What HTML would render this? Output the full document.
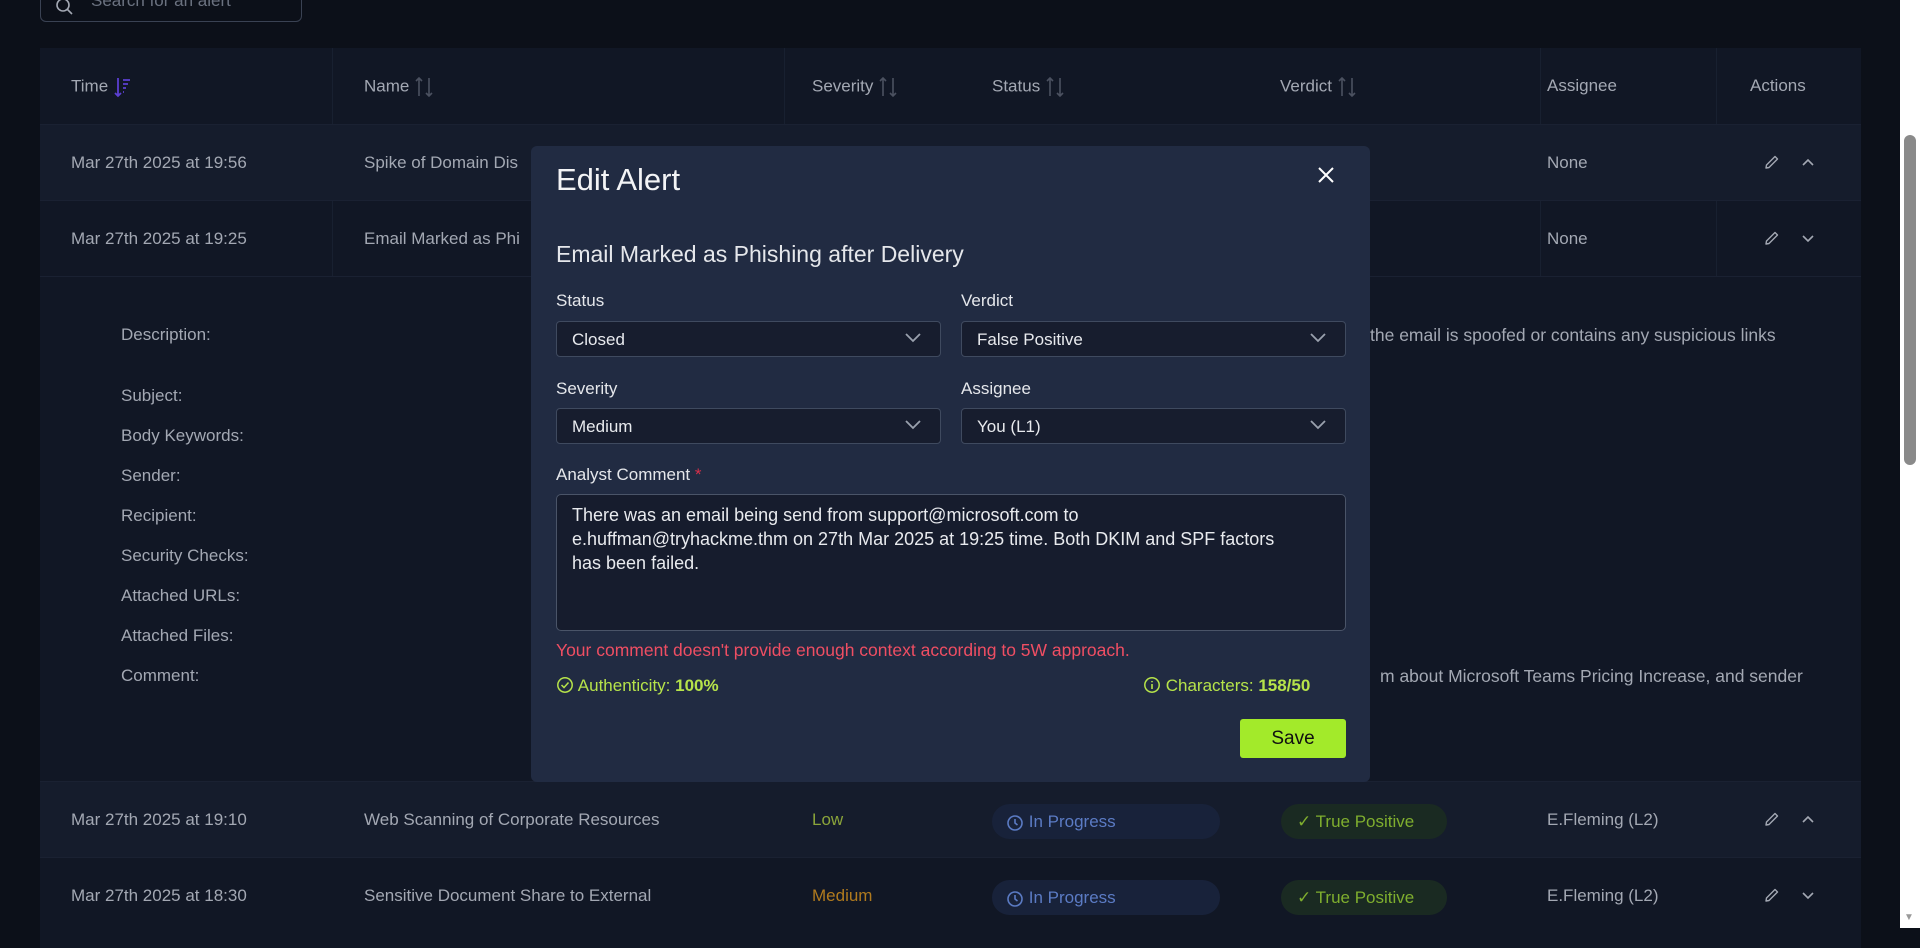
<!DOCTYPE html>
<html><head><meta charset="utf-8"><style>
*{box-sizing:border-box;margin:0;padding:0}
body{width:1920px;height:928px;overflow:hidden;background:#0c1019;font-family:"Liberation Sans",sans-serif;color:#a3a8b3;position:relative;font-size:17px}
.abs{position:absolute}
.search{left:40px;top:-20px;width:262px;height:42px;border:1px solid #3a4253;border-radius:6px;color:#6b7280;padding:10px 0 0 50px;font-size:17px}
.table{left:40px;top:48px;width:1821px;height:900px;background:#111725}
.hdr{top:0;height:76px;left:0;width:1821px;background:#111725}
.row{left:0;width:1821px;height:76px;border-top:1px solid #1a2132}
.t{position:absolute;white-space:nowrap}
.vl{position:absolute;top:0;width:1px;background:#182030}
.pill{position:absolute;height:35px;border-radius:18px;font-size:17px;padding-top:8px;white-space:nowrap}
.modal{left:531px;top:146px;width:839px;height:636px;background:#212b42;border-radius:6px;color:#e5e7eb}
.lbl{position:absolute;font-size:17px;color:#e5e7eb}
.sel{position:absolute;height:36px;width:385px;background:#171d2e;border:1px solid #3f4a5f;border-radius:4px;font-size:17px;padding:8px 0 0 15px;color:#e8eaee}
.sel svg{position:absolute;right:18px;top:10px}
.sb{left:1900px;top:0;width:20px;height:928px;background:#fff}
.ic{display:inline-block;vertical-align:middle}
</style></head><body>
<div class="abs search"><svg class="abs" style="left:14px;top:16px" width="20" height="20" viewBox="0 0 20 20"><circle cx="8" cy="8" r="6" fill="none" stroke="#a3a8b3" stroke-width="1.6"/><path d="M12.5 12.5L17 17" stroke="#a3a8b3" stroke-width="1.6"/></svg>Search for an alert</div>
<svg width="0" height="0" style="position:absolute"><defs>
<symbol id="srt" viewBox="0 0 20 22"><path d="M5 20V2M2 5L5 2L8 5M15 2V20M12 17L15 20L18 17" fill="none" stroke="#4b5160" stroke-width="1.6"/></symbol>
<symbol id="pen" viewBox="0 0 16 16"><path d="M11 2.5L13.5 5L5 13.5L2 14L2.5 11Z" fill="none" stroke="#a3a8b3" stroke-width="1.4" stroke-linejoin="round"/></symbol>
</defs></svg>
<div class="abs table">
 <div class="abs hdr">
  <span class="t" style="left:31px;top:28px">Time <svg class="ic" width="20" height="22" viewBox="0 0 20 22"><path d="M5 2V20M2 17L5 20L8 17" fill="none" stroke="#5b3fd1" stroke-width="1.8"/><path d="M10 4H17M10 8H15M10 12H13M10 16H11" stroke="#5b3fd1" stroke-width="1.8"/></svg></span>
  <span class="t" style="left:324px;top:28px">Name <svg class="ic" width="20" height="22"><use href="#srt"/></svg></span>
  <span class="t" style="left:772px;top:28px">Severity <svg class="ic" width="20" height="22"><use href="#srt"/></svg></span>
  <span class="t" style="left:952px;top:28px">Status <svg class="ic" width="20" height="22"><use href="#srt"/></svg></span>
  <span class="t" style="left:1240px;top:28px">Verdict <svg class="ic" width="20" height="22"><use href="#srt"/></svg></span>
  <span class="t" style="left:1507px;top:28px">Assignee</span>
  <span class="t" style="left:1710px;top:28px">Actions</span>
 </div>
 <div class="vl" style="left:292px;height:228px"></div>
 <div class="vl" style="left:744px;height:228px"></div>
 <div class="vl" style="left:1500px;height:228px"></div>
 <div class="vl" style="left:1676px;height:228px"></div>
 <div class="abs row" style="top:76px;background:#151c2c">
  <span class="t" style="left:31px;top:28px">Mar 27th 2025 at 19:56</span>
  <span class="t" style="left:324px;top:28px">Spike of Domain Dis</span>
  <span class="t" style="left:1507px;top:28px">None</span>
  <svg class="abs" style="left:1724px;top:29px" width="16" height="16"><use href="#pen"/></svg>
  <svg class="abs" style="left:1761px;top:32px" width="14" height="10" viewBox="0 0 14 10"><path d="M2 8L7 3L12 8" fill="none" stroke="#a3a8b3" stroke-width="1.6"/></svg>
 </div>
 <div class="abs row" style="top:152px">
  <span class="t" style="left:31px;top:28px">Mar 27th 2025 at 19:25</span>
  <span class="t" style="left:324px;top:28px">Email Marked as Phi</span>
  <span class="t" style="left:1507px;top:28px">None</span>
  <svg class="abs" style="left:1724px;top:29px" width="16" height="16"><use href="#pen"/></svg>
  <svg class="abs" style="left:1761px;top:33px" width="14" height="10" viewBox="0 0 14 10"><path d="M2 2L7 7L12 2" fill="none" stroke="#a3a8b3" stroke-width="1.6"/></svg>
 </div>
 <div class="abs" style="top:228px;left:0;width:1821px;height:505px;border-top:1px solid #1a2132">
  <span class="t" style="left:81px;top:48px">Description:</span>
  <span class="t" style="left:1330px;top:48px;font-size:17.5px">the email is spoofed or contains any suspicious links</span>
  <span class="t" style="left:81px;top:109px">Subject:</span>
  <span class="t" style="left:81px;top:149px">Body Keywords:</span>
  <span class="t" style="left:81px;top:189px">Sender:</span>
  <span class="t" style="left:81px;top:229px">Recipient:</span>
  <span class="t" style="left:81px;top:269px">Security Checks:</span>
  <span class="t" style="left:81px;top:309px">Attached URLs:</span>
  <span class="t" style="left:81px;top:349px">Attached Files:</span>
  <span class="t" style="left:81px;top:389px">Comment:</span>
  <span class="t" style="left:1340px;top:389px;font-size:17.5px">m about Microsoft Teams Pricing Increase, and sender</span>
 </div>
 <div class="abs row" style="top:733px;background:#151c2c">
  <span class="t" style="left:31px;top:28px">Mar 27th 2025 at 19:10</span>
  <span class="t" style="left:324px;top:28px">Web Scanning of Corporate Resources</span>
  <span class="t" style="left:772px;top:28px;color:#8aa43a">Low</span>
  <div class="pill" style="left:952px;top:22px;width:228px;background:#18223a;color:#5b7bc4;padding-left:14px"><svg class="ic" width="18" height="18" viewBox="0 0 18 18"><circle cx="9" cy="9" r="7" fill="none" stroke="#5b7bc4" stroke-width="1.6"/><path d="M9 5V9L11.5 11" fill="none" stroke="#5b7bc4" stroke-width="1.6"/></svg> In Progress</div>
  <div class="pill" style="left:1241px;top:22px;width:166px;background:#1a2a22;color:#7fae2e;padding-left:16px">✓ True Positive</div>
  <span class="t" style="left:1507px;top:28px">E.Fleming (L2)</span>
  <svg class="abs" style="left:1724px;top:29px" width="16" height="16"><use href="#pen"/></svg>
  <svg class="abs" style="left:1761px;top:32px" width="14" height="10" viewBox="0 0 14 10"><path d="M2 8L7 3L12 8" fill="none" stroke="#a3a8b3" stroke-width="1.6"/></svg>
 </div>
 <div class="abs row" style="top:809px">
  <span class="t" style="left:31px;top:28px">Mar 27th 2025 at 18:30</span>
  <span class="t" style="left:324px;top:28px">Sensitive Document Share to External</span>
  <span class="t" style="left:772px;top:28px;color:#b07a1e">Medium</span>
  <div class="pill" style="left:952px;top:22px;width:228px;background:#18223a;color:#5b7bc4;padding-left:14px"><svg class="ic" width="18" height="18" viewBox="0 0 18 18"><circle cx="9" cy="9" r="7" fill="none" stroke="#5b7bc4" stroke-width="1.6"/><path d="M9 5V9L11.5 11" fill="none" stroke="#5b7bc4" stroke-width="1.6"/></svg> In Progress</div>
  <div class="pill" style="left:1241px;top:22px;width:166px;background:#1a2a22;color:#7fae2e;padding-left:16px">✓ True Positive</div>
  <span class="t" style="left:1507px;top:28px">E.Fleming (L2)</span>
  <svg class="abs" style="left:1724px;top:29px" width="16" height="16"><use href="#pen"/></svg>
  <svg class="abs" style="left:1761px;top:33px" width="14" height="10" viewBox="0 0 14 10"><path d="M2 2L7 7L12 2" fill="none" stroke="#a3a8b3" stroke-width="1.6"/></svg>
 </div>
</div>
<div class="abs modal">
 <div class="t" style="left:25px;top:16px;font-size:31px;font-weight:300;color:#f3f4f6">Edit Alert</div>
 <svg class="abs" style="left:786px;top:20px" width="18" height="18" viewBox="0 0 18 18"><path d="M2 2L16 16M16 2L2 16" stroke="#fff" stroke-width="2"/></svg>
 <div class="t" style="left:25px;top:95px;font-size:23px;color:#e5e7eb">Email Marked as Phishing after Delivery</div>
 <div class="lbl" style="left:25px;top:145px">Status</div>
 <div class="lbl" style="left:430px;top:145px">Verdict</div>
 <div class="sel" style="left:25px;top:175px">Closed<svg width="18" height="12" viewBox="0 0 18 12"><path d="M2 2L9 9L16 2" fill="none" stroke="#9aa1ae" stroke-width="1.8"/></svg></div>
 <div class="sel" style="left:430px;top:175px">False Positive<svg width="18" height="12" viewBox="0 0 18 12"><path d="M2 2L9 9L16 2" fill="none" stroke="#9aa1ae" stroke-width="1.8"/></svg></div>
 <div class="lbl" style="left:25px;top:233px">Severity</div>
 <div class="lbl" style="left:430px;top:233px">Assignee</div>
 <div class="sel" style="left:25px;top:262px">Medium<svg width="18" height="12" viewBox="0 0 18 12"><path d="M2 2L9 9L16 2" fill="none" stroke="#9aa1ae" stroke-width="1.8"/></svg></div>
 <div class="sel" style="left:430px;top:262px">You (L1)<svg width="18" height="12" viewBox="0 0 18 12"><path d="M2 2L9 9L16 2" fill="none" stroke="#9aa1ae" stroke-width="1.8"/></svg></div>
 <div class="lbl" style="left:25px;top:319px">Analyst Comment <span style="color:#d9304a">*</span></div>
 <div class="abs" style="left:25px;top:348px;width:790px;height:137px;background:#161c2d;border:1px solid #4a5468;border-radius:5px;padding:8px 15px;font-size:18px;line-height:24px;color:#e8eaee;white-space:nowrap">There was an email being send from support@microsoft.com to<br>e.huffman@tryhackme.thm on 27th Mar 2025 at 19:25 time. Both DKIM and SPF factors<br>has been failed.</div>
 <div class="t" style="left:25px;top:494px;color:#ef4e63;font-size:17.5px">Your comment doesn't provide enough context according to 5W approach.</div>
 <div class="t" style="left:25px;top:530px;color:#b6e34a;font-size:17px"><svg class="ic" width="18" height="18" viewBox="0 0 18 18" style="margin-top:-3px"><circle cx="9" cy="9" r="7.2" fill="none" stroke="#b6e34a" stroke-width="1.5"/><path d="M5.5 9L8 11.5L12.5 6.5" fill="none" stroke="#b6e34a" stroke-width="1.5"/></svg> Authenticity: <b>100%</b></div>
 <div class="t" style="left:612px;top:530px;color:#b6e34a;font-size:17px"><svg class="ic" width="18" height="18" viewBox="0 0 18 18" style="margin-top:-3px"><circle cx="9" cy="9" r="7.2" fill="none" stroke="#b6e34a" stroke-width="1.5"/><path d="M9 8V13M9 5V6.2" stroke="#b6e34a" stroke-width="1.6"/></svg> Characters: <b>158/50</b></div>
 <div class="abs" style="left:709px;top:573px;width:106px;height:39px;background:#a3ea2a;border-radius:3px;color:#111;font-size:19px;text-align:center;padding-top:9px">Save</div>
</div>
<div class="abs sb"><div class="abs" style="left:4px;top:135px;width:12px;height:330px;background:#8a8a8a;border-radius:6px"></div><div class="abs" style="left:4px;top:912px;color:#999;font-size:10px">▼</div></div>
</body></html>
